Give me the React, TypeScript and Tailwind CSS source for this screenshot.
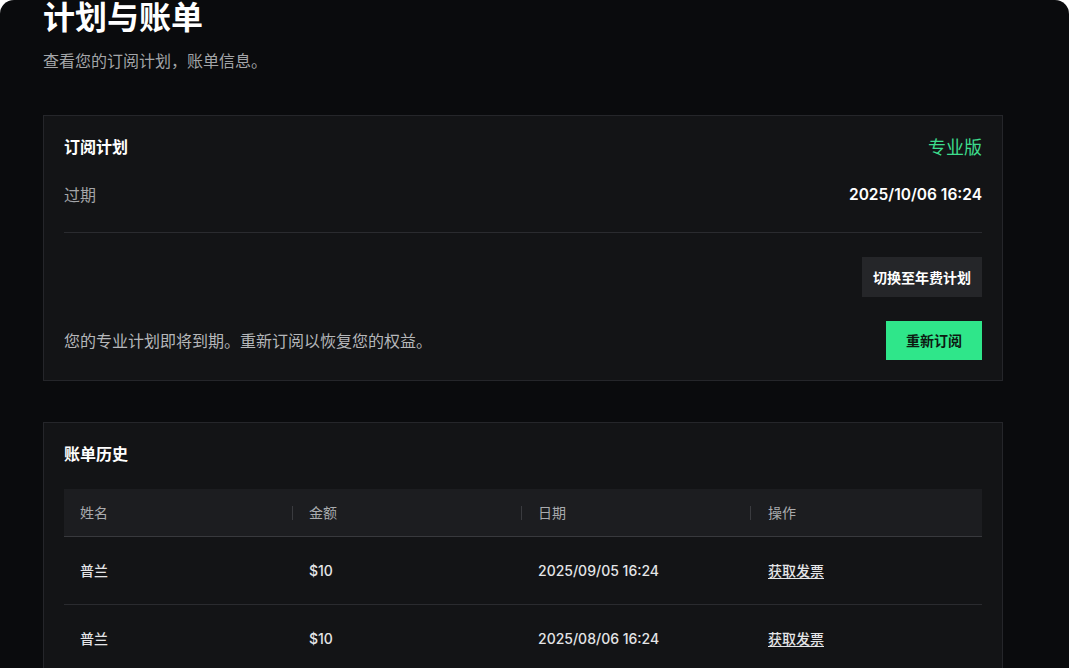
import React from "react";

const font = { fontFamily: 'Inter, "Noto Sans CJK SC", sans-serif' };

function Sep() {
  return <span className="absolute left-0 top-1/2 -translate-y-1/2 h-[14px] w-px bg-[#3a3b3f]" />;
}

export default function App() {
  const rows = [
    { name: "普兰", amount: "$10", date: "2025/09/05 16:24" },
    { name: "普兰", amount: "$10", date: "2025/08/06 16:24" },
  ];
  return (
    <div className="bg-white w-[1069px] h-[668px] overflow-hidden" style={font}>
      <div className="bg-[#0a0b0d] rounded-t-[14px] h-full px-[43px] text-white">
        <h1 className="text-[32px] leading-[36px] font-bold text-white">计划与账单</h1>
        <p className="mt-[14px] text-[16px] leading-[22px] text-[#a3a5a8]">查看您的订阅计划，账单信息。</p>

        <div className="mt-[43px] w-[960px] border border-[#25262a] bg-[#131416] px-5 pt-5 pb-5">
          <div className="flex items-center justify-between h-[22px]">
            <span className="text-[16px] font-bold text-white">订阅计划</span>
            <span className="text-[18px] text-[#3ddc8c]">专业版</span>
          </div>
          <div className="mt-[26px] flex items-center justify-between h-[22px]">
            <span className="text-[16px] text-[#a3a5a8]">过期</span>
            <span className="text-[15.5px] font-semibold text-white">2025/10/06 16:24</span>
          </div>
          <div className="mt-[26px] h-px bg-[#2a2b2f]" />
          <div className="mt-[24px] flex justify-end">
            <button className="h-10 w-[120px] bg-[#252629] text-[14px] font-bold text-white">切换至年费计划</button>
          </div>
          <div className="mt-[24px] flex items-center justify-between">
            <span className="text-[16px] text-[#b5b7ba]">您的专业计划即将到期。重新订阅以恢复您的权益。</span>
            <button className="h-[39px] w-[96px] bg-[#2fe68a] text-[14px] font-semibold text-[#0d1a12]">重新订阅</button>
          </div>
        </div>

        <div className="mt-[41px] w-[960px] border border-[#25262a] bg-[#131416] px-5 pt-5 pb-5">
          <div className="h-[22px] flex items-center text-[16px] font-bold text-white">账单历史</div>
          <div className="mt-[24px]">
            <div className="grid grid-cols-[228px_229px_229px_1fr] h-[48px] bg-[#1c1d20] border-b border-[#38393d] items-center text-[14px] text-[#a9abae]">
              <div className="pl-4">姓名</div>
              <div className="relative pl-[17px]"><Sep />金额</div>
              <div className="relative pl-[17px]"><Sep />日期</div>
              <div className="relative pl-[18px]"><Sep />操作</div>
            </div>
            {rows.map((r, i) => (
              <div key={i} className="grid grid-cols-[228px_229px_229px_1fr] h-[68px] border-b border-[#2a2b2f] items-center text-[14px] font-medium text-[#e4e5e7]">
                <div className="pl-4">{r.name}</div>
                <div className="pl-[17px]">{r.amount}</div>
                <div className="pl-[17px]">{r.date}</div>
                <div className="pl-[18px]"><span className="underline underline-offset-2">获取发票</span></div>
              </div>
            ))}
          </div>
        </div>
      </div>
    </div>
  );
}
